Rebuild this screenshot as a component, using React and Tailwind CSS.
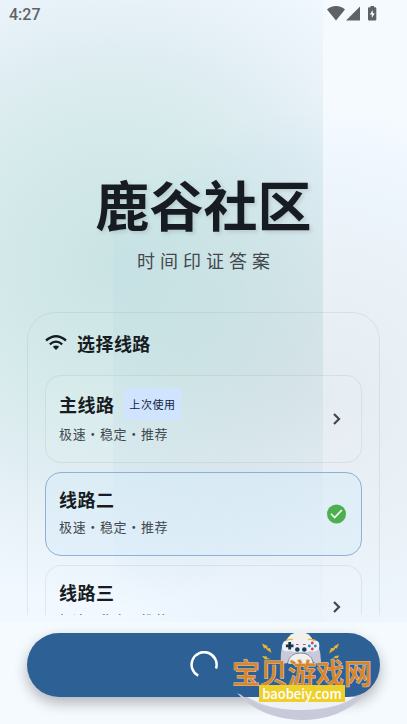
import React, { useState } from 'react'

const lines = [
  { id: 1, name: '主线路', desc: '极速・稳定・推荐', lastUsed: true },
  { id: 2, name: '线路二', desc: '极速・稳定・推荐', lastUsed: false },
  { id: 3, name: '线路三', desc: '极速・稳定・推荐', lastUsed: false },
]

const StatusBar = () => (
  <header className="flex h-[29px] shrink-0 items-center justify-between pl-[9px] pr-[27px] text-[#5f6265]">
    <span className="font-[Roboto] text-base font-medium">4:27</span>
    <div className="flex items-center pb-1">
      <svg className="h-4 w-[18px]" viewBox="0 0 18 16" fill="currentColor">
        <path d="M0 4.6C2.3 2.4 5.4 1 9 1s6.700 1.400 9 3.600L9 15.500z" />
      </svg>
      <svg className="h-4 w-4" viewBox="0 0 16 16" fill="currentColor">
        <path d="M15 1.500V15.500H1z" />
      </svg>
      <svg className="ml-[3px] h-4 w-4" viewBox="0 0 16 16" fill="currentColor">
        <path fillRule="evenodd" d="M6.500 1h3.500v1.300h1.300q1 0 1 1V14.500q0 1-1 1H5q-1 0-1-1V3.300q0-1 1-1h1.500zM8.800 5L5.800 9.600h2V13l3-4.700h-2z" />
      </svg>
    </div>
  </header>
)

const LineItem = ({ item, active, onSelect }) => (
  <button
    type="button"
    aria-pressed={active}
    onClick={() => onSelect(item.id)}
    className={`flex w-full items-center justify-between rounded-2xl border px-[13px] text-left ${active ? 'border-[#90b1d1] bg-[#d8ecf9]/50' : 'border-[#7a8a95]/15 bg-white/5'} ${item.lastUsed ? 'h-[88px]' : 'h-[84px]'}`}
  >
    <div>
      <div className={`flex items-center gap-[10px] ${item.lastUsed ? 'h-[30px]' : 'h-[26px]'}`}>
        <span className="text-lg font-bold tracking-wide text-[#171c22]">{item.name}</span>
        {item.lastUsed && (
          <span className="flex h-8 items-center rounded bg-[#d1e4ff] px-[5px] text-[11px] tracking-wider text-[#0b2240]">上次使用</span>
        )}
      </div>
      <p className="h-[30px] text-[13px] leading-[30px] tracking-wider text-[#43484e]">{item.desc}</p>
    </div>
    {active ? (
      <svg className="h-6 w-6" viewBox="0 0 24 24">
        <circle cx="12.500" cy="12" r="9.500" fill="#4caf50" />
        <path d="M7 11.800l3.600 3.700 7.300-7.500" fill="none" stroke="#fff" strokeWidth="1.600" />
      </svg>
    ) : (
      <svg className="h-6 w-6" viewBox="0 0 24 24" fill="none" stroke="#43484e" strokeWidth="2.200">
        <path d="M10 7l5 5-5 5" />
      </svg>
    )}
  </button>
)

const Watermark = () => (
  <div className="pointer-events-none absolute right-[36px] top-0 flex w-[138px] flex-col items-center pt-[44px]">
    <svg className="absolute left-0 top-0 h-[109px] w-[142px]" viewBox="0 0 142 109">
      {/* disc and its rim */}
      <path d="M14 82h109q-21 13-55 13-32 0-54-13z" fill="#f0f1f5" />
      <path d="M4 78q4 1 8 5c16 8 36 12 57 12 22 0 42-5 53-13h7c-14 15-36 23-60 23-26 0-50-10-65-27z" fill="#c9cad9" />
      {/* controller */}
      <path d="M53 27q3-10 14-10t13 10v6H53z" fill="#f1f1ec" />
      <path d="M50 29q-3 9-2 18 3 3 8 0 3-9 12-9t12 9q5 3 8 0 0-9-3-18z" fill="#c9cad9" />
      <path d="M55 47q2-9 12.500-9T80 47v2H55z" fill="#f1f1ec" stroke="#4a6287" strokeWidth=".6" />
      <path d="M50 28q1-3 7-3 4 0 7 2h8q3-2 7-2 6 0 7 3 1 5-1 7-4 3-8 1l-3 1H62q-2 0-4-1-6 1-8-1-2-3 0-7z" fill="#eff0f7" />
      <path d="M53 25.500q3-1.500 7-1M75 24.500q4-.5 7 1" stroke="#eeb83a" strokeWidth="1.400" fill="none" />
      <path d="M55.300 27h2.800v2.400h2.400v2.800h-2.400v2.400h-2.800v-2.400h-2.400v-2.800h2.400z" fill="#173344" />
      <circle cx="64.300" cy="34.500" r="2.300" fill="#123f50" />
      <circle cx="71.300" cy="34.500" r="2.300" fill="#123f50" />
      <path d="M63 29.500h2.600M70 29.500h2.600" stroke="#cf4456" strokeWidth="1.200" />
      <circle cx="79.300" cy="28" r="1.400" fill="#d53d51" />
      <circle cx="76.300" cy="31" r="1.400" fill="#2494b5" />
      <circle cx="82.300" cy="31" r="1.400" fill="#2494b5" />
      <circle cx="79.300" cy="34" r="1.400" fill="#d53d51" />
      {/* lightning */}
      <path d="M29 28.500l5.500 2.500v2.500l2.500-.5 1.500 5-5-3.500-.5-1.500-2 .5zM29 41l5 .500v1.500l4 1-6 .5zM106 28.500l-4.500 2.500-1 2-2.500 0-2 5.500 6-4v-1.500l2 .5zM106 40.500l-4 .500-1 1.500-3 1 7-.5z" fill="#e9b530" />
    </svg>
    <span className="relative whitespace-nowrap text-[28px] font-medium leading-[26px] text-[#de8420] [paint-order:stroke_fill] [-webkit-text-stroke:1px_#d8cdc8]">宝贝游戏网</span>
    <span className="relative flex h-[17px] w-[86px] items-center justify-center bg-[#eed02d] text-[13px] font-medium leading-4 text-white">baobeiy.com</span>
  </div>
)

const App = () => {
  const [selected, setSelected] = useState(2)

  return (
    <div className="flex h-screen flex-col overflow-hidden bg-[#f5faff] bg-[image:radial-gradient(circle_290px_at_210px_400px,rgba(95,120,135,0.11),rgba(90,135,155,0.07)_50%,rgba(60,140,240,0.03)_85%,rgba(60,140,255,0)_100%),radial-gradient(circle_at_210px_265px,#cae4e3_0px,#d5eaea_130px,#deedf1_205px,#e8f2f8_270px,#f1f8ff_340px)] bg-[size:420px_100%,420px_100%] bg-[position:113px_0px,-97px_0px] bg-no-repeat font-['Noto_Sans_CJK_SC',sans-serif]">
      <StatusBar />
      <main className="min-h-0 flex-1 overflow-hidden px-[27px]">
        <div className="pt-[137px] text-center">
          <h1 className="text-[54px] font-bold leading-[76px] text-[#171c22] [text-shadow:2px_2px_4px_rgba(0,0,0,0.12)]">鹿谷社区</h1>
          <p className="mt-1 pl-[5px] text-lg tracking-[5px] text-[#43484e]">时间印证答案</p>
        </div>
        <section className="mt-[38px] rounded-[28px] border border-[#7a8a95]/15 px-[17px] pt-4">
          <h2 className="flex items-center gap-[10px] text-lg font-bold tracking-wide text-[#171c22]">
            <svg className="h-[22px] w-[22px]" viewBox="0 0 22 22" fill="none" stroke="currentColor" strokeWidth="2.300">
              <path d="M1 8.500Q11 0 21 8.500M4.800 12.300Q11 7 17.200 12.300" />
              <path d="M7.800 14.800Q11 12.300 14.200 14.800L11 18z" fill="currentColor" stroke="none" />
            </svg>
            选择线路
          </h2>
          <div className="mt-[18px] flex flex-col gap-[9px]">
            {lines.map((item) => (
              <LineItem key={item.id} item={item} active={item.id === selected} onSelect={setSelected} />
            ))}
          </div>
        </section>
      </main>
      <footer className="relative shrink-0 bg-[linear-gradient(transparent_7px,#f5faff_7px)] px-[27px] pb-[27px] pt-[18px]">
        <button type="button" aria-label="进入" className="flex h-16 w-full items-center justify-center rounded-full bg-[#2d6196] shadow-[0_6px_14px_rgba(0,0,0,0.28)]">
          <svg className="h-7 w-7" viewBox="0 0 28 28" fill="none" stroke="#fff" strokeWidth="2.500">
            <path d="M8.200 24.700A12.500 12.500 0 1 1 26 17.500" />
          </svg>
        </button>
        <Watermark />
      </footer>
    </div>
  )
}

export default App
